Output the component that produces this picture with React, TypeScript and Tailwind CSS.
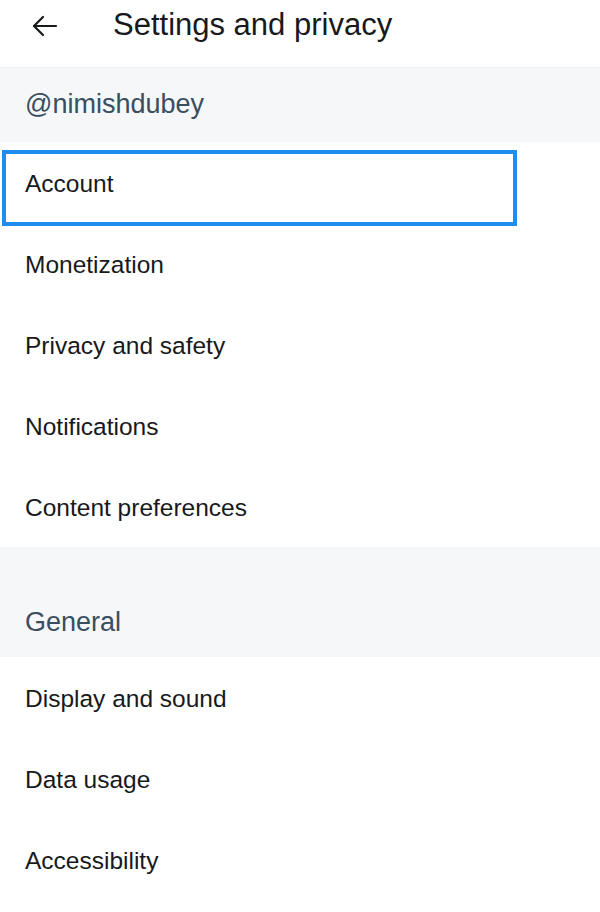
import { ReactNode } from "react";

const accountItems = [
  "Account",
  "Monetization",
  "Privacy and safety",
  "Notifications",
  "Content preferences",
];

const generalItems = ["Display and sound", "Data usage", "Accessibility"];

function Row({ label, focused }: { label: string; focused?: boolean }) {
  return (
    <div className="relative flex h-[81px] items-center px-[25px] pt-[3px] text-[24.5px] text-[#17191c]">
      {focused && (
        <div className="pointer-events-none absolute left-[2px] top-[8px] h-[76px] w-[515px] border-4 border-[#1d8ef0]" />
      )}
      <span>{label}</span>
    </div>
  );
}

function SectionHeader({ children, className }: { children: ReactNode; className: string }) {
  return (
    <div className={`flex bg-[#f5f7f8] px-[25px] text-[27px] text-[#3a4e5e] ${className}`}>
      {children}
    </div>
  );
}

export default function App() {
  return (
    <div
      className="min-h-[912px] w-[600px] overflow-hidden bg-white"
      style={{ fontFamily: '"Liberation Sans", Arial, sans-serif' }}
    >
      {/* Top bar */}
      <div className="flex h-[68px] items-center border-b border-[#eceff0] pb-[20px] pt-[4px]">
        <svg
          width="27"
          height="24"
          viewBox="0 0 27 24"
          className="ml-[31px]"
          fill="none"
          stroke="#17191c"
          strokeWidth="2.2"
          strokeLinecap="round"
          strokeLinejoin="round"
        >
          <path d="M25 12H3" />
          <path d="M12 3L3 12L12 21" />
        </svg>
        <h1 className="ml-[55px] text-[31px] font-normal text-[#17191c]">Settings and privacy</h1>
      </div>

      <SectionHeader className="h-[74px] items-center pb-[2px]">@nimishdubey</SectionHeader>

      <div>
        {accountItems.map((item, i) => (
          <Row key={item} label={item} focused={i === 0} />
        ))}
      </div>

      <SectionHeader className="h-[110px] items-end pb-[15px]">General</SectionHeader>

      <div>
        {generalItems.map((item) => (
          <Row key={item} label={item} />
        ))}
      </div>
    </div>
  );
}
